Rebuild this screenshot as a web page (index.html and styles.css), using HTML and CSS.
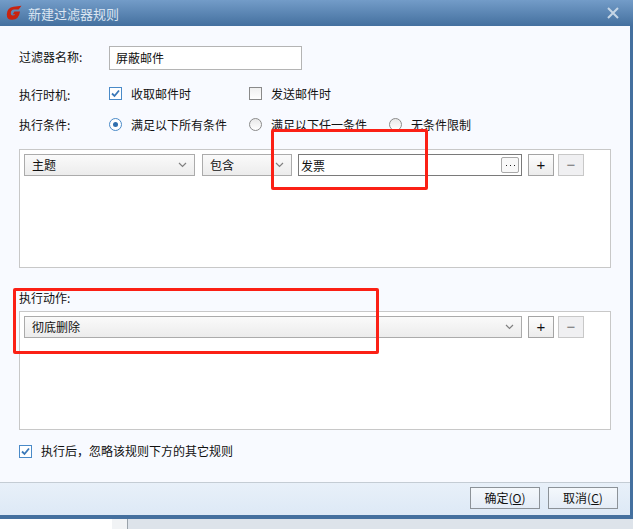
FILE: index.html
```html
<!DOCTYPE html>
<html lang="zh-CN">
<head>
  <meta charset="UTF-8" />
  <title>新建过滤器规则</title>
  <link rel="stylesheet" href="styles.css">
</head>
<body>
  <div class="dialog">
    <div class="titlebar">
      <svg class="logo" width="16" height="16" viewBox="0 0 16 16">
        <path d="M15.5 .8 L12.6 4.6 L8 4.6 Q5.2 4.8 4.8 7.8 Q4.6 10.4 6.8 10.4 Q8.6 10.4 9.2 9.2 L6.8 9.2 L8.4 6.4 L14 6.4 Q13 14.4 6.2 14.8 Q.6 15 .8 9.2 Q1.2 2.4 7.6 1.8 Z" fill="#c9230f"/>
      </svg>
      <span class="title">新建过滤器规则</span>
      <svg class="close" width="12" height="12" viewBox="0 0 12 12">
        <path d="M1 1 L11 11 M11 1 L1 11" stroke="#c6d6e6" stroke-width="2"/>
      </svg>
    </div>

    <div class="content">
      <div class="row row-name">
        <span class="label">过滤器名称:</span>
        <div class="text-input">屏蔽邮件</div>
      </div>

      <div class="row row-time">
        <span class="label">执行时机:</span>
        <div class="option opt-1">
          <span class="check on"><svg width="11" height="11" viewBox="0 0 11 11"><path d="M2 5.5 L4.5 8 L9 2.5" fill="none" stroke="#3a78b8" stroke-width="1.8"/></svg></span>
          <span>收取邮件时</span>
        </div>
        <div class="option opt-2">
          <span class="check"></span>
          <span>发送邮件时</span>
        </div>
      </div>

      <div class="row row-cond">
        <span class="label">执行条件:</span>
        <div class="option opt-1">
          <span class="radio on"></span>
          <span>满足以下所有条件</span>
        </div>
        <div class="option opt-2">
          <span class="radio"></span>
          <span>满足以下任一条件</span>
        </div>
        <div class="option">
          <span class="radio"></span>
          <span>无条件限制</span>
        </div>
      </div>

      <div class="rule-box">
        <div class="rule-line">
          <div class="select sel-field"><span>主题</span><svg class="arrow" width="9" height="6" viewBox="0 0 9 6"><path d="M1 1 L4.5 4.5 L8 1" fill="none" stroke="#808080" stroke-width="1.2"/></svg></div>
          <div class="select sel-op"><span>包含</span><svg class="arrow" width="9" height="6" viewBox="0 0 9 6"><path d="M1 1 L4.5 4.5 L8 1" fill="none" stroke="#808080" stroke-width="1.2"/></svg></div>
          <div class="value-input"><span>发票</span><span class="more"><i></i><i></i><i></i></span></div>
          <div class="btn-add">+</div>
          <div class="btn-del">−</div>
        </div>
      </div>

      <div class="action-label">执行动作:</div>
      <div class="rule-box action-box">
        <div class="rule-line">
          <div class="select sel-action"><span>彻底删除</span><svg class="arrow" width="9" height="6" viewBox="0 0 9 6"><path d="M1 1 L4.5 4.5 L8 1" fill="none" stroke="#808080" stroke-width="1.2"/></svg></div>
          <div class="btn-add">+</div>
          <div class="btn-del">−</div>
        </div>
      </div>

      <div class="option row-skip">
        <span class="check on"><svg width="11" height="11" viewBox="0 0 11 11"><path d="M2 5.5 L4.5 8 L9 2.5" fill="none" stroke="#3a78b8" stroke-width="1.8"/></svg></span>
        <span class="skip-text">执行后，忽略该规则下方的其它规则</span>
      </div>
    </div>

    <div class="footer">
      <div class="btn">确定(<u>O</u>)</div>
      <div class="btn">取消(<u>C</u>)</div>
    </div>
  </div>

  <div class="behind">
    <div class="behind-list"></div>
    <div class="behind-gutter"></div>
    <div class="behind-main"></div>
  </div>

  <!-- red marks drawn over the screenshot -->
  <div class="mark mark-1"></div>
  <div class="mark mark-2"></div>
</body>
</html>
```

FILE: styles.css
```css
* {
  box-sizing: border-box;
}

body {
  margin: 0;
  width: 633px;
  height: 529px;
  overflow: hidden;
  position: relative;
  font-family: "Noto Sans CJK SC", "Liberation Sans", sans-serif;
  font-size: 12px;
  color: #111;
  background: #dde3ea;
}

.dialog {
  width: 633px;
  height: 519px;
  display: flex;
  flex-direction: column;
  background: #44709f;
  padding: 0 3px 4px 0;
}

.titlebar {
  height: 26px;
  margin-right: -3px;
  flex-shrink: 0;
  display: flex;
  align-items: center;
  padding: 0 14px 0 6px;
  background: linear-gradient(#739cc8, #44709f);
}

.logo {
  flex-shrink: 0;
}

.title {
  margin-left: 6px;
  font-size: 13px;
  color: #dbe6f2;
}

.close {
  margin-left: auto;
}

.content {
  flex: 1;
  background: #f8faff;
  padding: 20px 0 0 19px;
}

.row {
  display: flex;
  align-items: center;
}

.label {
  width: 90px;
  flex-shrink: 0;
}

.row-name {
  height: 24px;
}

.row-name .label {
  padding-bottom: 4px;
}

.row-time .label {
  padding-top: 2px;
}

.text-input {
  width: 193px;
  height: 24px;
  line-height: 21px;
  padding-left: 6px;
  background: #fff;
  border: 1px solid #b4b4b4;
}

.row-time {
  height: 14px;
  margin-top: 16px;
}

.row-cond {
  height: 14px;
  margin-top: 17px;
}

.option {
  display: flex;
  align-items: center;
  gap: 9px;
}

.opt-1 {
  width: 140px;
}

.opt-2 {
  width: 140px;
}

.check {
  width: 13px;
  height: 13px;
  flex-shrink: 0;
  display: flex;
  align-items: center;
  justify-content: center;
  background: linear-gradient(#f0f0f0, #fff);
  border: 1px solid #8a8a8a;
}

.check.on {
  border-color: #4a8ac8;
  background: #fff;
}

.radio {
  width: 13px;
  height: 13px;
  flex-shrink: 0;
  border-radius: 50%;
  border: 1px solid #8a8a8a;
  background: linear-gradient(#e8e8e8, #fff);
  display: flex;
  align-items: center;
  justify-content: center;
}

.radio.on {
  border-color: #4a8ac8;
  background: #fff;
}

.radio.on::after {
  content: "";
  width: 5px;
  height: 5px;
  border-radius: 50%;
  background: #2f6fae;
}

.rule-box {
  width: 592px;
  height: 119px;
  margin-top: 18px;
  padding: 4px;
  background: #fff;
  border: 1px solid #c8c8c8;
}

.action-box {
  margin-top: 5px;
}

.action-label {
  margin-top: 23px;
  height: 15px;
  line-height: 14px;
}

.rule-line {
  display: flex;
  height: 22px;
}

.select {
  height: 22px;
  display: flex;
  align-items: center;
  justify-content: space-between;
  padding: 0 7px;
  background: linear-gradient(#fafafa, #ececec);
  border: 1px solid #ababab;
}

.select span {
  line-height: 18px;
  padding-bottom: 1px;
}

.sel-field {
  width: 171px;
}

.sel-op {
  width: 90px;
  margin-left: 7px;
}

.sel-action {
  width: 498px;
}

.value-input {
  width: 224px;
  height: 22px;
  margin-left: 6px;
  display: flex;
  align-items: center;
  justify-content: space-between;
  padding: 0 2px 0 2px;
  background: #fff;
  border: 1px solid #7a7a7a;
}

.more {
  width: 18px;
  height: 16px;
  display: flex;
  align-items: center;
  justify-content: center;
  gap: 3px;
  border: 1px solid #a8a8a8;
  border-radius: 2px;
  background: #f8f8f8;
}

.more i {
  width: 1px;
  height: 1px;
  background: #222;
}

.btn-add,
.btn-del {
  width: 26px;
  height: 22px;
  line-height: 19px;
  text-align: center;
  font-family: "Liberation Sans", sans-serif;
  font-size: 15px;
}

.btn-add {
  margin-left: 6px;
  color: #111;
  background: linear-gradient(#fdfdfd, #ececec);
  border: 1px solid #a4a4a4;
}

.btn-del {
  margin-left: 4px;
  color: #777;
  background: #f0f0f2;
  border: 1px solid #c8c8c8;
}

.row-skip {
  margin-top: 14px;
  height: 14px;
}

.skip-text {
  padding-bottom: 2px;
}

.footer {
  height: 33px;
  flex-shrink: 0;
  display: flex;
  justify-content: flex-end;
  gap: 8px;
  padding: 4px 12px 0 0;
  background: linear-gradient(#e8f0f9, #dde9f6);
  border-top: 1px solid #c4ccd4;
}

.btn {
  width: 70px;
  height: 22px;
  line-height: 19px;
  text-align: center;
  background: linear-gradient(#f4f8fc, #e4ecf6);
  border: 1px solid #8c9298;
}

.behind {
  height: 10px;
  display: flex;
}

.behind-list {
  width: 112px;
  background: #fff;
}

.behind-gutter {
  width: 16px;
  background: #f1f3f5;
  border-right: 1px solid #9aa2aa;
}

.behind-main {
  flex: 1;
  background: #dde3ea;
}

.mark {
  position: absolute;
  border: 3px solid #fb2015;
  border-radius: 2px;
}

.mark-1 {
  left: 271px;
  top: 129px;
  width: 157px;
  height: 61px;
}

.mark-2 {
  left: 13px;
  top: 288px;
  width: 366px;
  height: 66px;
}
```
